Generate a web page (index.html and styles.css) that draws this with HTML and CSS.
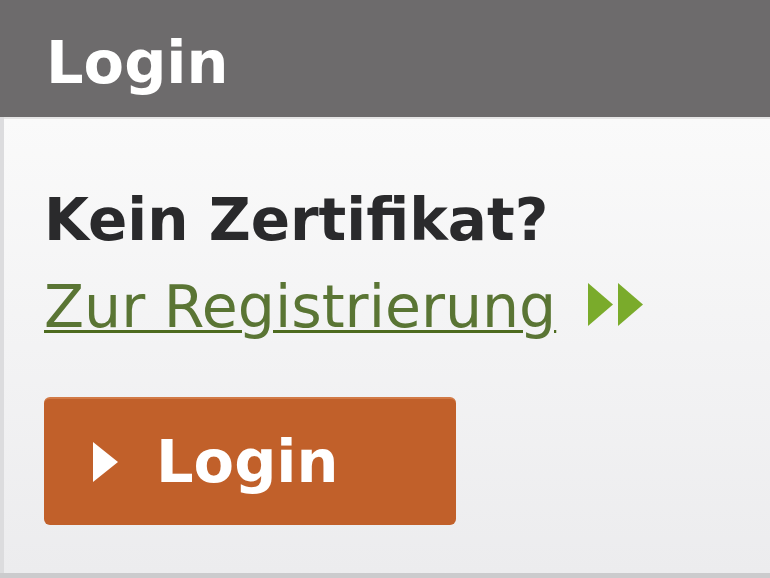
FILE: index.html
```html
<!DOCTYPE html>
<html lang="de">
<head>
<meta charset="utf-8">
<title>Login</title>
<link rel="stylesheet" href="styles.css">
</head>
<body>
<div class="panel">
  <div class="panel-head">Login</div>
  <div class="panel-body">
    <div class="question">Kein Zertifikat?</div>
    <div class="register">
      <a class="register-link" href="#">Zur Registrierung</a>
      <svg class="double-arrow" width="56" height="43" viewBox="0 0 56 43"><polygon points="0,0 25,21.5 0,43" fill="#7aab2b"/><polygon points="30,0 55,21.5 30,43" fill="#7aab2b"/></svg>
    </div>
    <button class="login-btn" type="button">
      <svg class="btn-arrow" width="25" height="40" viewBox="0 0 25 40"><polygon points="0,0 25,20 0,40" fill="#ffffff"/></svg>
      <span class="btn-label">Login</span>
    </button>
  </div>
</div>
</body>
</html>
```
FILE: styles.css
```css
html, body {
  margin: 0;
  padding: 0;
}
body {
  width: 770px;
  height: 578px;
  overflow: hidden;
  background: #cbcbcd;
  font-family: "DejaVu Sans", Verdana, sans-serif;
}
.panel {
  height: 573px;
  display: flex;
  flex-direction: column;
  border-left: 4px solid #dcdcde;
  box-sizing: border-box;
}
.panel-head {
  background: #6d6b6c;
  color: #ffffff;
  font-weight: bold;
  font-size: 59px;
  line-height: 70px;
  height: 117px;
  box-sizing: border-box;
  padding: 28px 0 19px 46px;
  margin-left: -4px;
}
.panel-body {
  flex: 1;
  border-top: 2px solid #e6e6e6;
  background: linear-gradient(#fafafa, #ececee);
  padding: 66px 0 0 40px;
}
.question {
  font-weight: bold;
  font-size: 58px;
  line-height: 70px;
  color: #2a2a2c;
}
.register {
  display: flex;
  align-items: center;
  margin-top: 17px;
  height: 70px;
}
.register-link {
  font-size: 58.5px;
  line-height: 70px;
  color: #5a7534;
  text-decoration: underline;
  text-decoration-color: #4d6b1f;
  text-decoration-thickness: 3px;
  text-underline-offset: 3px;
}
.double-arrow {
  margin-left: 32px;
  margin-top: -6px;
}
.login-btn {
  display: flex;
  align-items: center;
  margin-top: 55px;
  width: 412px;
  height: 128px;
  box-sizing: border-box;
  padding: 0 0 0 49px;
  border: none;
  border-top: 2px solid #d27a46;
  border-radius: 6px;
  background: #c1602a;
  color: #ffffff;
  font-family: "DejaVu Sans", Verdana, sans-serif;
  font-weight: bold;
  font-size: 59px;
  line-height: 70px;
  cursor: pointer;
}
.btn-arrow {
  margin-right: 38px;
  margin-top: 0;
}
```
